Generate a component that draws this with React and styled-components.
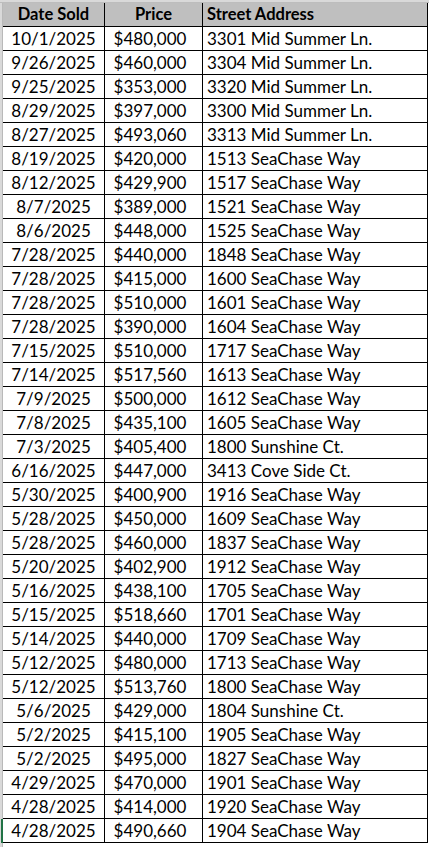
import React from "react"
import styled, { createGlobalStyle } from "styled-components"

const GlobalStyle = createGlobalStyle`
  html, body {
    margin: 0;
    padding: 0;
    background: #fff;
  }
`

const rows = [
  ["10/1/2025", "$480,000", "3301 Mid Summer Ln."],
  ["9/26/2025", "$460,000", "3304 Mid Summer Ln."],
  ["9/25/2025", "$353,000", "3320 Mid Summer Ln."],
  ["8/29/2025", "$397,000", "3300 Mid Summer Ln."],
  ["8/27/2025", "$493,060", "3313 Mid Summer Ln."],
  ["8/19/2025", "$420,000", "1513 SeaChase Way"],
  ["8/12/2025", "$429,900", "1517 SeaChase Way"],
  ["8/7/2025", "$389,000", "1521 SeaChase Way"],
  ["8/6/2025", "$448,000", "1525 SeaChase Way"],
  ["7/28/2025", "$440,000", "1848 SeaChase Way"],
  ["7/28/2025", "$415,000", "1600 SeaChase Way"],
  ["7/28/2025", "$510,000", "1601 SeaChase Way"],
  ["7/28/2025", "$390,000", "1604 SeaChase Way"],
  ["7/15/2025", "$510,000", "1717 SeaChase Way"],
  ["7/14/2025", "$517,560", "1613 SeaChase Way"],
  ["7/9/2025", "$500,000", "1612 SeaChase Way"],
  ["7/8/2025", "$435,100", "1605 SeaChase Way"],
  ["7/3/2025", "$405,400", "1800 Sunshine Ct."],
  ["6/16/2025", "$447,000", "3413 Cove Side Ct."],
  ["5/30/2025", "$400,900", "1916 SeaChase Way"],
  ["5/28/2025", "$450,000", "1609 SeaChase Way"],
  ["5/28/2025", "$460,000", "1837 SeaChase Way"],
  ["5/20/2025", "$402,900", "1912 SeaChase Way"],
  ["5/16/2025", "$438,100", "1705 SeaChase Way"],
  ["5/15/2025", "$518,660", "1701 SeaChase Way"],
  ["5/14/2025", "$440,000", "1709 SeaChase Way"],
  ["5/12/2025", "$480,000", "1713 SeaChase Way"],
  ["5/12/2025", "$513,760", "1800 SeaChase Way"],
  ["5/6/2025", "$429,000", "1804 Sunshine Ct."],
  ["5/2/2025", "$415,100", "1905 SeaChase Way"],
  ["5/2/2025", "$495,000", "1827 SeaChase Way"],
  ["4/29/2025", "$470,000", "1901 SeaChase Way"],
  ["4/28/2025", "$414,000", "1920 SeaChase Way"],
  ["4/28/2025", "$490,660", "1904 SeaChase Way"],
]

// the cropped sheet: grey gridline gutter on the left, strip on top
const Sheet = styled.div`
  width: 429px;
  min-height: 847px;
  background: linear-gradient(to right, #d9d9d9 0 2px, #b9b9b9 2px 3px, #fff 3px);
  font-family: Lato, "Liberation Sans", sans-serif;
  color: #000;
`

const TopStrip = styled.div`
  height: 2px;
  background: #d9d9d9;
  border-bottom: 1px solid #bdbdbd;
`

const Row = styled.div`
  display: grid;
  grid-template-columns: 3px 102px 98px 225px;
  height: 24px;
`

const Gutter = styled.div`
  margin-left: 1px;
  background: ${({ $selected }) => ($selected ? "#217346" : "transparent")};
  border-bottom: 1px solid ${({ $selected }) => ($selected ? "#217346" : "transparent")};
`

const Cell = styled.div`
  box-sizing: border-box;
  border-right: 1px solid #000;
  border-bottom: 1px solid #000;
  background: ${({ $head }) => ($head ? "#bfbfbf" : "#fff")};
  font-size: ${({ $head }) => ($head ? "16.5px" : "17px")};
  font-weight: ${({ $head }) => ($head ? 700 : 400)};
  line-height: 23px;
  white-space: nowrap;
  overflow: hidden;
  text-align: ${({ $align }) => $align || "left"};
  padding: ${({ $pad }) => $pad || "0"};
`

const App = () => {
  return (
    <>
      <GlobalStyle />
      <Sheet>
        <TopStrip />
        <Row>
          <Gutter />
          <Cell $head $align="center">Date Sold</Cell>
          <Cell $head $align="center">Price</Cell>
          <Cell $head $pad="0 0 0 4px">Street Address</Cell>
        </Row>
        {rows.map(([date, price, addr], i) => (
          <Row key={i}>
            <Gutter $selected={i === rows.length - 1} />
            <Cell $align="center">{date}</Cell>
            <Cell $align="center" $pad="0 7px 0 0">{price}</Cell>
            <Cell $pad="0 0 0 4px">{addr}</Cell>
          </Row>
        ))}
      </Sheet>
    </>
  )
}

export default App
